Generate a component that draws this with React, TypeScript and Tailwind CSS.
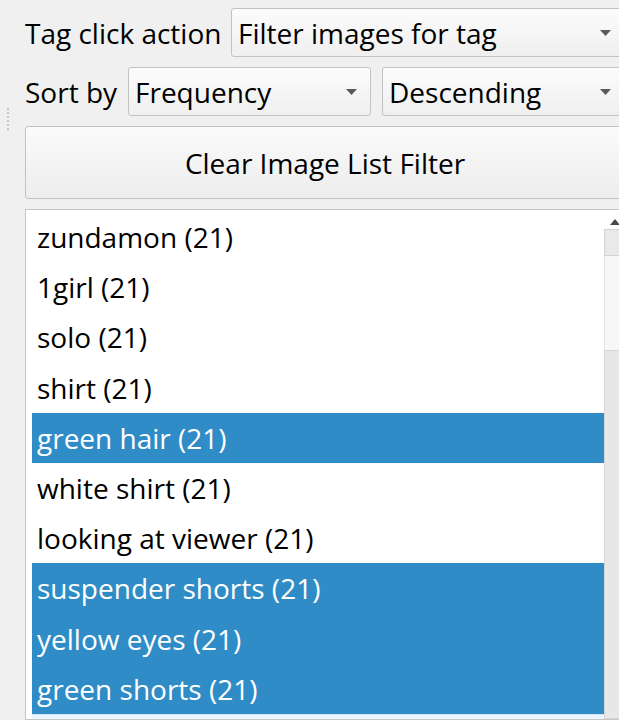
import React from "react";

const FONT = { fontFamily: '"Open Sans", "Noto Sans", sans-serif' };

type Tag = { name: string; count: number; selected?: boolean };

const TAGS: Tag[] = [
  { name: "zundamon", count: 21 },
  { name: "1girl", count: 21 },
  { name: "solo", count: 21 },
  { name: "shirt", count: 21 },
  { name: "green hair", count: 21, selected: true },
  { name: "white shirt", count: 21 },
  { name: "looking at viewer", count: 21 },
  { name: "suspender shorts", count: 21, selected: true },
  { name: "yellow eyes", count: 21, selected: true },
  { name: "green shorts", count: 21, selected: true },
];

function DownArrow() {
  return (
    <svg width="11" height="6" viewBox="0 0 11 6" className="shrink-0">
      <path d="M0 0 H11 L5.5 6 Z" fill="#5a5a5a" />
    </svg>
  );
}

function Combo({ value, className }: { value: string; className: string }) {
  return (
    <div
      className={`${className} h-[49px] flex items-center justify-between pl-[6px] pr-[13px] border border-[#c2c2c2] rounded-[3px] bg-gradient-to-b from-[#fcfcfc] to-[#efefef] text-[28px] text-black leading-none`}
    >
      <span className="whitespace-nowrap">{value}</span>
      <DownArrow />
    </div>
  );
}

export default function App() {
  return (
    <div
      className="w-[619px] h-[720px] overflow-hidden bg-[#f0f0f0] flex text-black"
      style={FONT}
    >
      {/* splitter grip */}
      <div className="w-[25px] shrink-0 pt-[108px] pl-[7px]">
        <div className="w-[2px] h-[22px] border-l-2 border-dotted border-[#c8c8c8]" />
      </div>

      <div className="w-[600px] shrink-0 pt-[8px] flex flex-col">
        <div className="flex items-center">
          <span className="w-[206px] shrink-0 text-[28px] leading-none whitespace-nowrap">
            Tag click action
          </span>
          <Combo value="Filter images for tag" className="flex-1" />
        </div>

        <div className="flex items-center mt-[10px]">
          <span className="w-[103px] shrink-0 text-[28px] leading-none whitespace-nowrap">
            Sort by
          </span>
          <Combo value="Frequency" className="w-[243px] shrink-0" />
          <Combo value="Descending" className="flex-1 ml-[11px]" />
        </div>

        <button className="mt-[10px] h-[73px] border border-[#c2c2c2] rounded-[3px] bg-gradient-to-b from-[#fbfbfb] to-[#ededed] text-[28px] text-black text-center leading-none">
          Clear Image List Filter
        </button>

        <div className="mt-[10px] flex-1 min-h-0 bg-white border border-[#c6c6c6] flex">
          <div className="flex-1 pl-[6px] pt-[2px] flex flex-col overflow-hidden">
            {TAGS.map((t) => (
              <div
                key={t.name}
                className={`h-[50.2px] shrink-0 flex items-center pl-[5px] text-[28px] leading-none whitespace-nowrap ${
                  t.selected ? "bg-[#308cc6] text-white" : "text-black"
                }`}
              >
                {t.name} ({t.count})
              </div>
            ))}
            <div className="h-[50px] shrink-0 bg-[#eaf5fd] border-t border-[#cfe5f6]" />
          </div>

          {/* vertical scrollbar */}
          <div className="w-[20px] shrink-0 flex flex-col">
            <div className="h-[19px] shrink-0 flex items-center justify-center pt-[5px] pl-[2px]">
              <svg width="10" height="6" viewBox="0 0 10 6">
                <path d="M0 6 H10 L5 0 Z" fill="#4a4a4a" />
              </svg>
            </div>
            <div className="h-[27px] shrink-0 bg-[#e9e9e9] border border-[#d2d2d2]" />
            <div className="h-[94px] shrink-0 bg-[#f7f7f7] border-l border-[#e4e4e4]" />
            <div className="flex-1 bg-[#e7e7e7] border border-[#d6d6d6]" />
          </div>
        </div>
      </div>
    </div>
  );
}
